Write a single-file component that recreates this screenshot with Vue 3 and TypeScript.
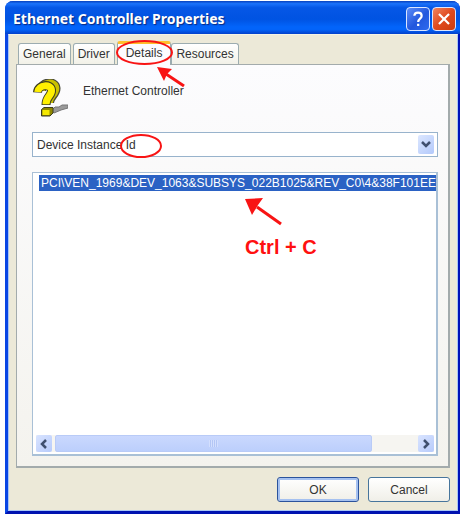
<script setup lang="ts">
import { ref } from 'vue'

const tabs: string[] = ['General', 'Driver', 'Details', 'Resources']
const activeTab = ref('Details')
const property = ref('Device Instance Id')
const values: string[] = ['PCI\\VEN_1969&DEV_1063&SUBSYS_022B1025&REV_C0\\4&38F101EE']
</script>

<template>
  <main class="window">
    <header class="titlebar">
      <h1 class="title">Ethernet Controller Properties</h1>
      <button class="caption help" type="button" aria-label="Help">
        <svg viewBox="0 0 24 24"><path d="M8 8.5C8.2 3.8 16 3.8 16 8.6C16 11.6 12.2 11.5 12.2 15.2M12.2 17.2V19.6" /></svg>
      </button>
      <button class="caption close" type="button" aria-label="Close">
        <svg viewBox="0 0 24 24"><path d="M6.5 6.5L17.5 17.5M17.5 6.5L6.5 17.5" /></svg>
      </button>
    </header>

    <div class="body">
      <nav class="tabs" role="tablist">
        <button
          v-for="tab in tabs"
          :key="tab"
          class="tab"
          :class="{ active: tab === activeTab }"
          type="button"
          role="tab"
          :aria-selected="tab === activeTab"
          @click="activeTab = tab"
        >
          {{ tab }}
          <svg v-if="tab === 'Details'" class="mark mark-tab" viewBox="0 0 72 52">
            <ellipse cx="27.5" cy="13.5" rx="27.5" ry="11.5" />
            <path class="shaft" d="M67 47L49 35" />
            <path class="head" d="M40 28L55 30L50 35L47 42Z" />
          </svg>
        </button>
      </nav>

      <section class="panel">
        <div class="device">
          <svg class="device-icon" viewBox="0 0 36 38">
            <path d="M19 32L23 28H27L30 26H36V29L29 31L22 34Z" fill="#9a9a9a" stroke="#777" />
            <path d="M9 11.5C10 3 23 2 23.5 9C24 15 17 17 17 24" stroke="#4a4a3c" stroke-width="10" />
            <path d="M9 11.5C10 3 23 2 23.5 9C24 15 17 17 17 24" stroke="#c9c000" stroke-width="7.5" />
            <path d="M5.5 13.5C6 5 19 4.500 19.500 11C20 17 14 17 14 26" stroke="#3c3c22" stroke-width="9" />
            <path d="M5.700 13C6.500 5.500 19 4.800 19.500 11C20 17 14 17 14 25.300" stroke="#fff000" stroke-width="7" />
            <path d="M9.500 30.500L12 28.500H21V34L18 37H9.500Z" fill="#8f8800" stroke="#3c3c22" />
            <path d="M10.500 31H17.500V36H10.500Z" fill="#f4e800" />
          </svg>
          <span class="device-name">Ethernet Controller</span>
        </div>

        <div class="combo">
          <select v-model="property" class="select" aria-label="Property">
            <option>Device Instance Id</option>
          </select>
          <span class="combo-arrow">
            <svg viewBox="0 0 16 18"><path d="M4 7L8 11L12 7" /></svg>
          </span>
          <svg class="mark mark-id" viewBox="0 0 42 24"><ellipse cx="21" cy="12" rx="20" ry="11" /></svg>
        </div>

        <div class="list">
          <ul class="items" role="listbox" aria-label="Value">
            <li v-for="value in values" :key="value" class="item" role="option" aria-selected="true">{{ value }}</li>
          </ul>
          <div class="scrollbar">
            <button class="scroll-btn" type="button" aria-label="Scroll left">
              <svg viewBox="0 0 16 16"><path d="M10 4L6 8L10 12" /></svg>
            </button>
            <div class="track"><div class="thumb"><span class="grip"></span></div></div>
            <button class="scroll-btn" type="button" aria-label="Scroll right">
              <svg viewBox="0 0 16 16"><path d="M6 4L10 8L6 12" /></svg>
            </button>
          </div>
          <div class="note">
            <svg class="mark mark-copy" viewBox="0 0 40 28">
              <path class="shaft" d="M36 26L12 9" />
              <path class="head" d="M0 1L18 0L13 7L7 17Z" />
            </svg>
            <span>Ctrl + C</span>
          </div>
        </div>
      </section>

      <footer class="actions">
        <button class="push default" type="button">OK</button>
        <button class="push" type="button">Cancel</button>
      </footer>
    </div>
  </main>
</template>

<style>
body {
  background: #fff;
}
</style>

<style scoped>
* {
  box-sizing: border-box;
}
.window {
  margin: 1px 0 5px 5px;
  border: solid #0a46e4;
  border-width: 0 2px 3px 3px;
  border-right-color: #0012b8;
  border-bottom-color: #0012b0;
  border-radius: 8px 8px 0 0;
  background: #0a50e8;
  font: 12px/16px "Liberation Sans", Arial, sans-serif;
  color: #333;
}
button {
  font: inherit;
  color: inherit;
}
svg {
  display: block;
  fill: none;
}
.titlebar {
  display: flex;
  align-items: center;
  gap: 2px;
  height: 33px;
  margin: 0 -2px 0 -3px;
  padding: 2px 4px 0 8px;
  border-radius: 8px 8px 0 0;
  background: linear-gradient(#0740bd 0, #1b72fa 8%, #0657e6 20%, #0053e2 55%, #0264fa 78%, #0264fa 86%, #0340ca 100%);
}
.title {
  flex: 1;
  margin: 0;
  font: bold 14px/20px "Noto Sans", sans-serif;
  color: #fff;
  text-shadow: 1px 1px 1px #0a2a80;
  white-space: nowrap;
}
.caption {
  width: 24px;
  height: 24px;
  padding: 0;
  border: 1px solid #dbe6ff;
  border-radius: 4px;
}
.caption svg {
  width: 22px;
  height: 22px;
  stroke: #fff;
  stroke-width: 2.4;
}
.help {
  background: linear-gradient(135deg, #5d8df8, #2257dd 55%, #2c6bf0);
}
.close {
  background: linear-gradient(135deg, #f0845f, #e04a1e 50%, #cc3d10);
}
.body {
  padding: 6px 7px 8px;
  border: 1px solid #a9c6f5;
  border-top-color: #f6f3e4;
  background: #ece9d8;
}
.tabs {
  display: flex;
  align-items: flex-end;
  gap: 2px;
  padding-left: 2px;
}
.tab {
  position: relative;
  height: 21px;
  padding: 0 4px;
  border: 1px solid #9cacb0;
  border-bottom: 0;
  border-radius: 3px 3px 0 0;
  background: linear-gradient(#fff, #f2f1e8);
}
.tab.active {
  z-index: 1;
  height: 24px;
  margin: 0 -2px -1px 0;
  padding: 0 8px 3px;
  border-top: 3px solid #ffc02c;
  background: #fcfcfe;
}
.panel {
  padding: 8px 10px 10px 15px;
  border: 1px solid #a3abac;
  border-right-width: 2px;
  border-bottom-width: 2px;
  background: linear-gradient(#fcfcfe, #f4f3ee);
}
.device {
  display: flex;
  gap: 15px;
  height: 59px;
  padding-top: 6px;
}
.device-icon {
  width: 36px;
  height: 38px;
}
.device-name {
  padding-top: 4px;
}
.combo {
  position: relative;
  display: flex;
  height: 25px;
  padding: 2px;
  border: 1px solid #98b3cc;
  background: #fff;
}
.select {
  flex: 1;
  padding: 0 2px;
  border: 0;
  background: transparent;
  font: inherit;
  color: inherit;
  appearance: none;
}
.combo-arrow {
  width: 16px;
  margin-right: 1px;
  border-radius: 2px;
  background: linear-gradient(135deg, #dce7ff, #b3c9fb);
  pointer-events: none;
}
.combo-arrow path,
.scroll-btn path {
  stroke: #40506f;
  stroke-width: 2.5;
}
.list {
  position: relative;
  display: flex;
  flex-direction: column;
  min-height: 284px;
  margin-top: 15px;
  padding: 2px 0 2px 3px;
  border: 1px solid #a9c0d6;
  border-right-width: 2px;
  border-bottom-width: 2px;
  background: #fff;
}
.items {
  flex: 1;
  margin: 0;
  padding: 0 0 0 3px;
  list-style: none;
  overflow: hidden;
}
.item {
  padding-left: 2px;
  overflow: hidden;
  background: #2b62c4;
  color: #fff;
  white-space: nowrap;
}
.scrollbar {
  display: flex;
  gap: 3px;
  height: 17px;
  margin-right: 2px;
  background: #f6f5f1;
}
.scroll-btn {
  width: 16px;
  padding: 0;
  border: 0;
  border-radius: 2px;
  background: linear-gradient(135deg, #d9e4ff, #b7cbfb);
}
.track {
  flex: 1;
}
.thumb {
  display: flex;
  align-items: center;
  justify-content: center;
  width: 88%;
  height: 17px;
  border: 1px solid #b9cbf7;
  border-radius: 2px;
  background: linear-gradient(#cad8fe, #bccffc);
}
.grip {
  width: 9px;
  height: 7px;
  background: repeating-linear-gradient(90deg, #d3dffe 0 1px, #b3c6f5 1px 2px);
}
.actions {
  display: flex;
  justify-content: flex-end;
  gap: 9px;
  padding-top: 9px;
}
.push {
  width: 82px;
  height: 25px;
  padding: 0;
  border: 1px solid #47759c;
  border-radius: 3px;
  background: linear-gradient(#fff, #f0efe8);
}
.push.default {
  border-color: #2b539c;
  box-shadow: inset 0 0 0 2px #a5c1f0;
}
.mark {
  position: absolute;
  overflow: visible;
  stroke: #f81414;
  stroke-width: 2;
  pointer-events: none;
}
.shaft {
  stroke-width: 3;
}
.head {
  fill: #f81414;
  stroke: none;
}
.mark-tab {
  left: -1px;
  top: -5px;
  width: 72px;
  height: 52px;
}
.mark-id {
  left: 87px;
  top: 1px;
  width: 42px;
  height: 24px;
}
.note {
  position: absolute;
  left: 212px;
  top: 62px;
  color: #ff1010;
  font-size: 20px;
  font-weight: bold;
  line-height: 24px;
}
.mark-copy {
  left: 0;
  top: -37px;
  width: 40px;
  height: 28px;
}
</style>
